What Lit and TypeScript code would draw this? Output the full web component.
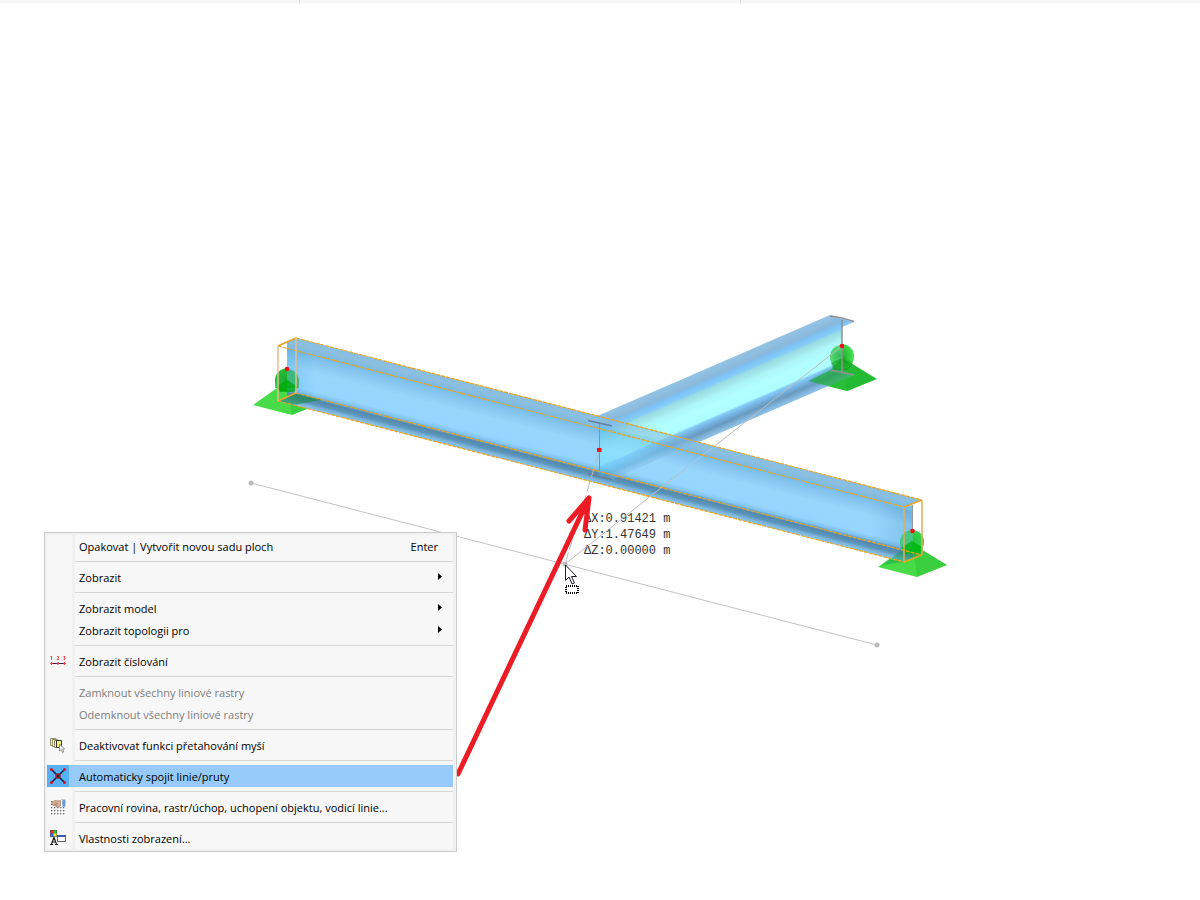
import { LitElement, html, css, svg, nothing } from "lit";
import { customElement, property } from "lit/decorators.js";

type IconName = "numbering" | "drag" | "connect" | "workplane" | "display";

interface MenuItem {
  label: string;
  shortcut?: string;
  submenu?: boolean;
  disabled?: boolean;
  active?: boolean;
  icon?: IconName;
}

const GROUPS: MenuItem[][] = [
  [{ label: "Opakovat | Vytvořit novou sadu ploch", shortcut: "Enter" }],
  [{ label: "Zobrazit", submenu: true }],
  [
    { label: "Zobrazit model", submenu: true },
    { label: "Zobrazit topologii pro", submenu: true },
  ],
  [{ label: "Zobrazit číslování", icon: "numbering" }],
  [
    { label: "Zamknout všechny liniové rastry", disabled: true },
    { label: "Odemknout všechny liniové rastry", disabled: true },
  ],
  [{ label: "Deaktivovat funkci přetahování myší", icon: "drag" }],
  [{ label: "Automaticky spojit linie/pruty", icon: "connect", active: true }],
  [{ label: "Pracovní rovina, rastr/úchop, uchopení objektu, vodicí linie...", icon: "workplane" }],
  [{ label: "Vlastnosti zobrazení...", icon: "display" }],
];

const dots = [0, 3, 6, 9, 12];

const ICONS = {
  numbering: svg`
    <path d="M.5 4L1.500 3V7M7 3.500h1.500V5L7 6.500h2M13.500 3.500H15L14 5h1v1.500h-1.500" fill="none" stroke="#f33a3a" stroke-width=".9"/>
    <path d="M2 10.500h13" stroke="#24245c"/>
    <path d="M.2 10.500L1.500 9l1.500 1.500L1.500 12zM6.500 10.500L8 9l1.500 1.500L8 12zM13 10.500L14.500 9 16 10.500 14.500 12z" fill="#f22"/>`,
  drag: svg`
    <g fill="#faf7cc" stroke="#77734a" stroke-width=".8">
      <path d="M.5 1.500h5v7h-5z"/><path d="M2.500 2.500h5v7h-5z"/><path d="M4.500 3.500h5v7h-5z"/>
    </g>
    <path d="M6.500 3.500h5v7h-5z" fill="#f7f27a" stroke="#333"/>
    <path d="M9.500 7v7l1.700-1.500 1.300 3 1.200-.5-1.200-3h2z" fill="#fff" stroke="#777" stroke-width=".8"/>`,
  connect: svg`
    <path d="M1 1l14 14M15 1L1 15" stroke="#102040" stroke-width="1.500"/>
    <circle cx="8" cy="8" r="2" fill="none" stroke="#b01020" stroke-width="1.300"/>
    <g fill="#e01020"><circle cx="1.500" cy="1.500" r="1.500"/><circle cx="14.500" cy="1.500" r="1.500"/><circle cx="1.500" cy="14.500" r="1.500"/><circle cx="14.500" cy="14.500" r="1.500"/></g>`,
  workplane: svg`
    <path d="M2 3l3-1.500 3 .5 3-.5v5L8 8 5 7 2 5.500z" fill="#d9b196" stroke="#8d6b58" stroke-width=".6"/>
    <path d="M4 5l3 1.500M5 4l3 1" stroke="#8d6b58" stroke-width=".6"/>
    <path d="M11 .5h4.500v7H12z" fill="#6d9fd0"/><path d="M11 1h1.200v6H11z" fill="#fff"/>
    ${[2, 5, 8, 11, 14].map((y) => dots.map((x) => (y < 8 && x > 1 ? nothing : svg`<rect x=${x + 1} y=${y} width="1.300" height="1.300" fill="#666"/>`)))}`,
  display: svg`
    <path d="M0 0h7v7H0z" fill="#555"/><path d="M.5 .5h3v3h-3z" fill="#f22"/><path d="M3.500 .5h3v3h-3z" fill="#2c2"/>
    <path d="M.5 3.500h3v3h-3z" fill="#36f"/><path d="M3.500 3.500h3v3h-3z" fill="#fe2"/>
    <path d="M1.500 14L4 7.500 6.500 14M2.500 12h3M0 14.500h3M5 14.500h3" stroke="#222" stroke-width="1.200" fill="none"/>
    <path d="M7.500 5.500h8v6h-8z" fill="#fff" stroke="#666"/><path d="M7 5h9v2H7z" fill="#3a5cb0"/>`,
};

@customElement("context-menu")
class ContextMenu extends LitElement {
  @property({ attribute: false }) groups: MenuItem[][] = [];

  static styles = css`
    :host {
      display: block;
      box-sizing: border-box;
      border: 1px solid #cbcbcb;
      padding: 2px 3px 2px 2px;
      background: #f1f1f1;
      font: 11px/20px "Open Sans", "Noto Sans", sans-serif;
      color: #000;
    }
    .group,
    .rule {
      background: linear-gradient(to right, #f7f7f7 25px, #f1f1f1 25px, #f1f1f1 28px, #f7f7f7 28px);
    }
    .separator {
      height: 1px;
      border: solid transparent;
      border-width: 4px 0 4px 28px;
      background: #d6d6d6 padding-box;
    }
    .item {
      display: grid;
      grid-template-columns: 22px 1fr auto;
      align-items: center;
      width: 100%;
      height: 22px;
      margin: 0;
      padding: 0;
      border: 0;
      background: none;
      font: inherit;
      color: inherit;
      text-align: left;
      white-space: nowrap;
    }
    .item:disabled {
      color: #7d7d7d;
    }
    .item:focus {
      outline: none;
    }
    .active {
      background: #96cbf9;
    }
    .icon {
      display: grid;
      place-items: center;
      height: 22px;
    }
    .active .icon {
      background: #57aff5;
    }
    .label,
    .shortcut {
      padding-top: 2px;
    }
    .label {
      padding-left: 10px;
    }
    .shortcut {
      padding-right: 15px;
    }
    .chevron {
      display: block;
      margin: 0 11px 2px 0;
    }
  `;

  render() {
    return html`<div role="menu">
      ${this.groups.map(
        (group, index) => html`
          ${index ? html`<div class="rule"><div class="separator" role="separator"></div></div>` : nothing}
          <div class="group">
            ${group.map(
              (item) => html`<button class="item ${item.active ? "active" : ""}" role="menuitem" ?disabled=${item.disabled}>
                <span class="icon">${item.icon ? html`<svg width="16" height="16" viewBox="0 0 16 16" aria-hidden="true">${ICONS[item.icon]}</svg>` : nothing}</span>
                <span class="label">${item.label}</span>
                ${item.shortcut ? html`<span class="shortcut">${item.shortcut}</span>` : nothing}
                ${item.submenu ? html`<svg class="chevron" width="4" height="7" viewBox="0 0 4 7" aria-hidden="true"><path d="M0 0L4 3.500 0 7z"/></svg>` : nothing}
              </button>`,
            )}
          </div>
        `,
      )}
    </div>`;
  }
}

const SECOND = "588,420 830,315 854,322 842,327 842,370 854,375 611,480 588,474";

/* Pinned support: a pyramid with a ball at its apex, drawn around the given node. */
const support = (x: number, y: number) => svg`
  <g transform="translate(${x} ${y})">
    <path d="M-34 24L-10 7 0 0 12 8 35 22 5 34z" fill="#1ed41e" fill-opacity=".82"/>
    <path d="M0 0L35 22 5 34z" fill="#0b9c1c" fill-opacity=".2"/>
    <circle r="12" cy="-1" fill="url(#ball)" fill-opacity=".85"/>
    <path d="M0 -2L11 5 4 10H-7L-11 6z" fill="#00a800" fill-opacity=".65"/>
  </g>`;

@customElement("model-view")
class ModelView extends LitElement {
  static styles = css`
    :host {
      display: block;
      position: relative;
      overflow: hidden;
    }
    .scene {
      display: block;
      width: 100%;
    }
    .delta {
      position: absolute;
      left: 584px;
      top: 508px;
      font: 12px/16px "Courier New", "Liberation Mono", monospace;
      color: #333;
      white-space: pre;
    }
    .overlay {
      position: absolute;
      left: 0;
      top: 0;
      width: 100%;
      pointer-events: none;
    }
  `;

  render() {
    return html`
      <svg class="scene" viewBox="0 3 1200 897" role="img" aria-label="Model">
        <defs>
          <linearGradient id="main" gradientUnits="userSpaceOnUse" x1="278" y1="333.400" x2="261.700" y2="396.800">
            <stop offset="0" stop-color="#86bfe4"/><stop offset=".09" stop-color="#8cbfe0"/>
            <stop offset=".15" stop-color="#82bbe0"/><stop offset=".19" stop-color="#76bdec"/>
            <stop offset=".27" stop-color="#85c5ee"/><stop offset=".45" stop-color="#98d7fc"/>
            <stop offset=".72" stop-color="#96d6fe"/><stop offset=".79" stop-color="#80c2ee"/>
            <stop offset=".81" stop-color="#6caad2"/><stop offset=".85" stop-color="#5489ae"/>
            <stop offset=".91" stop-color="#5d96bc"/><stop offset=".96" stop-color="#80b8de"/><stop offset="1" stop-color="#88c6f2"/>
          </linearGradient>
          <linearGradient id="second" gradientUnits="userSpaceOnUse" x1="588" y1="420" x2="613.900" y2="479.800">
            <stop offset="0" stop-color="#8abfe3"/><stop offset=".15" stop-color="#80b2d8"/>
            <stop offset=".18" stop-color="#72bbf0"/><stop offset=".26" stop-color="#7cc8fb"/>
            <stop offset=".29" stop-color="#90d8de"/><stop offset=".43" stop-color="#a7f5f6"/>
            <stop offset=".55" stop-color="#adffff"/><stop offset=".71" stop-color="#a8fdff"/>
            <stop offset=".74" stop-color="#7cc8f8"/><stop offset=".81" stop-color="#68a8da"/>
            <stop offset=".87" stop-color="#5e92ba"/><stop offset=".94" stop-color="#78b0da"/><stop offset="1" stop-color="#88c2ef"/>
          </linearGradient>
          <radialGradient id="ball" cx=".4" cy=".45" r=".6">
            <stop offset="0" stop-color="#0ca01e"/><stop offset=".5" stop-color="#22c232"/><stop offset="1" stop-color="#42e34c"/>
          </radialGradient>
          <linearGradient id="fade" x1="0" x2="1"><stop offset="0" stop-color="#4cc8f8" stop-opacity=".3"/><stop offset="1" stop-color="#4cc8f8" stop-opacity="0"/></linearGradient>
          <linearGradient id="fadeEnd" x1="0" x2="1"><stop offset="0" stop-color="#3880b0" stop-opacity="0"/><stop offset="1" stop-color="#3880b0" stop-opacity=".25"/></linearGradient>
          <linearGradient id="fadeStart" x1="0" x2="1"><stop offset="0" stop-color="#3898d8" stop-opacity=".25"/><stop offset="1" stop-color="#3898d8" stop-opacity="0"/></linearGradient>
          <clipPath id="inMain"><polygon points="599,417 922,500 904,562 599,484"/></clipPath>
        </defs>

        <path d="M251 483L877 645" fill="none" stroke="#c2c2c2"/>
        <g fill="#bababa"><circle cx="251" cy="483" r="2.500"/><circle cx="877" cy="645" r="2.500"/><circle cx="565" cy="564" r="2.500"/></g>

        ${support(287, 381)} ${support(842, 357)} ${support(912, 543)}

        <polygon points=${SECOND} fill="url(#second)" fill-opacity=".93"/>
        <path d="M842 358L876 379 847 391 809 381 830 370z" fill="#18ae2c" fill-opacity=".65"/>
        <circle cx="842" cy="357" r="12" fill="url(#ball)" fill-opacity=".7"/>
        <path d="M842 358L853 364 847 370H834L831 363z" fill="#008c10" fill-opacity=".45"/>

        <path d="M296 338L922 500 904 507 913 505V557L904 562 278 401 287 397V343L278 346z" fill="url(#main)"/>
        <path d="M287 348L315 355V399L287 392z" fill="url(#fadeStart)"/>
        <path d="M278 401L296 393 322 400 293 405z" fill="#1c8a48" fill-opacity=".65"/>
        <path d="M275 381a12 12 0 0 1 24 0v7h-24z" fill="#11ad2b" fill-opacity=".6"/>
        <path d="M276 387L287 380 298 387 294 392H280z" fill="#00ac0c" fill-opacity=".8"/>
        <g clip-path="url(#inMain)">
          <polygon points=${SECOND} fill="url(#second)" opacity=".42"/>
          <path d="M599 426L685 447 599 478z" fill="url(#fade)"/>
        </g>
        <path d="M870 500L913 511V557L870 546z" fill="url(#fadeEnd)"/>
        <path d="M882 565L912 543 922 548V556L904 562z" fill="#1a9f4c" fill-opacity=".5"/>
        <circle cx="912" cy="542" r="12" fill="#20c83c" fill-opacity=".6"/>
        <path d="M901 548L912 541 923 548 919 554H906z" fill="#00b810" fill-opacity=".8"/>

        <g fill="none">
          <path d="M588 420.500L612 426M588 474L612 479.500" stroke="#66809a" stroke-width="1.500"/>
          <path d="M599.500 424V475" stroke="#7895aa"/>
          <path d="M830 316Q842 317 854 321.500M842 320V373M830 370L854 375" stroke="#94908f" stroke-width="1.500"/>
          <path d="M912.500 505V530" stroke="#92999f"/>
        </g>

        <path d="M716 445L842 346" stroke="#bcbcbc" fill="none"/>
        <path d="M686 468L716 445" stroke="#a6cbe6" fill="none"/>
        <path d="M599 452L565 564" stroke="#bababa" stroke-dasharray="12 3" fill="none"/>

        <g fill="none" stroke="#eba420">
          <path d="M278 346L904 507M296 338L922 500M278 401L904 562M296 393L922 555" stroke-width="1.200" stroke-dasharray="4 1"/>
          <path d="M278 346L296 338M278 401L296 393M904 507L922 500M904 562L922 555" stroke-width="1.500"/>
          <path d="M278 346V401M296 338V393" stroke="#e2bd91" stroke-width="1.500"/>
          <path d="M904 507V562M922 500V555" stroke="#e2ad55" stroke-width="1.500"/>
        </g>

        <g fill="#f50d18">
          <circle cx="287" cy="369" r="2.300"/><circle cx="842" cy="346" r="2.300"/><circle cx="912.500" cy="531" r="2.300"/>
          <rect x="597" y="448" width="4.500" height="4"/>
        </g>
      </svg>

      <div class="delta">ΔX:0.91421 m
ΔY:1.47649 m
ΔZ:0.00000 m</div>

      <svg class="overlay" viewBox="0 3 1200 897" aria-hidden="true">
        <path d="M565 564L686 468" stroke="#bcbcbc"/>
        <path d="M458 774L589 498M569 521L589 498 585 530" fill="none" stroke="#ed1c24" stroke-width="5" stroke-linecap="round" stroke-linejoin="round"/>
        <path d="M589 498L578 511 587 513z" fill="#ed1c24" stroke="#ed1c24" stroke-width="3" stroke-linejoin="round"/>
        <path d="M565.500 565v15.500l3.500-3.500 3 7 2.500-1-3-6.500h5z" fill="#fff" stroke="#1d1d35"/>
        <rect x="566" y="586" width="12" height="7" fill="#fff" stroke="#000" stroke-width="2" stroke-dasharray="1 1"/>
      </svg>
    `;
  }
}

@customElement("app-root")
class AppRoot extends LitElement {
  static styles = css`
    :host {
      display: block;
      position: relative;
      min-height: 100vh;
      background: #fff;
      overflow: hidden;
    }
    .panes {
      display: grid;
      grid-template-columns: 299fr 441fr 460fr;
      height: 3px;
      background: #f6f6f6;
    }
    .pane + .pane {
      border-left: 1px solid #d9d9d9;
    }
    .menu {
      position: absolute;
      left: 44px;
      top: 532px;
      width: 413px;
    }
  `;

  render() {
    return html`
      <div class="panes"><div class="pane"></div><div class="pane"></div><div class="pane"></div></div>
      <model-view></model-view>
      <context-menu class="menu" .groups=${GROUPS}></context-menu>
    `;
  }
}
